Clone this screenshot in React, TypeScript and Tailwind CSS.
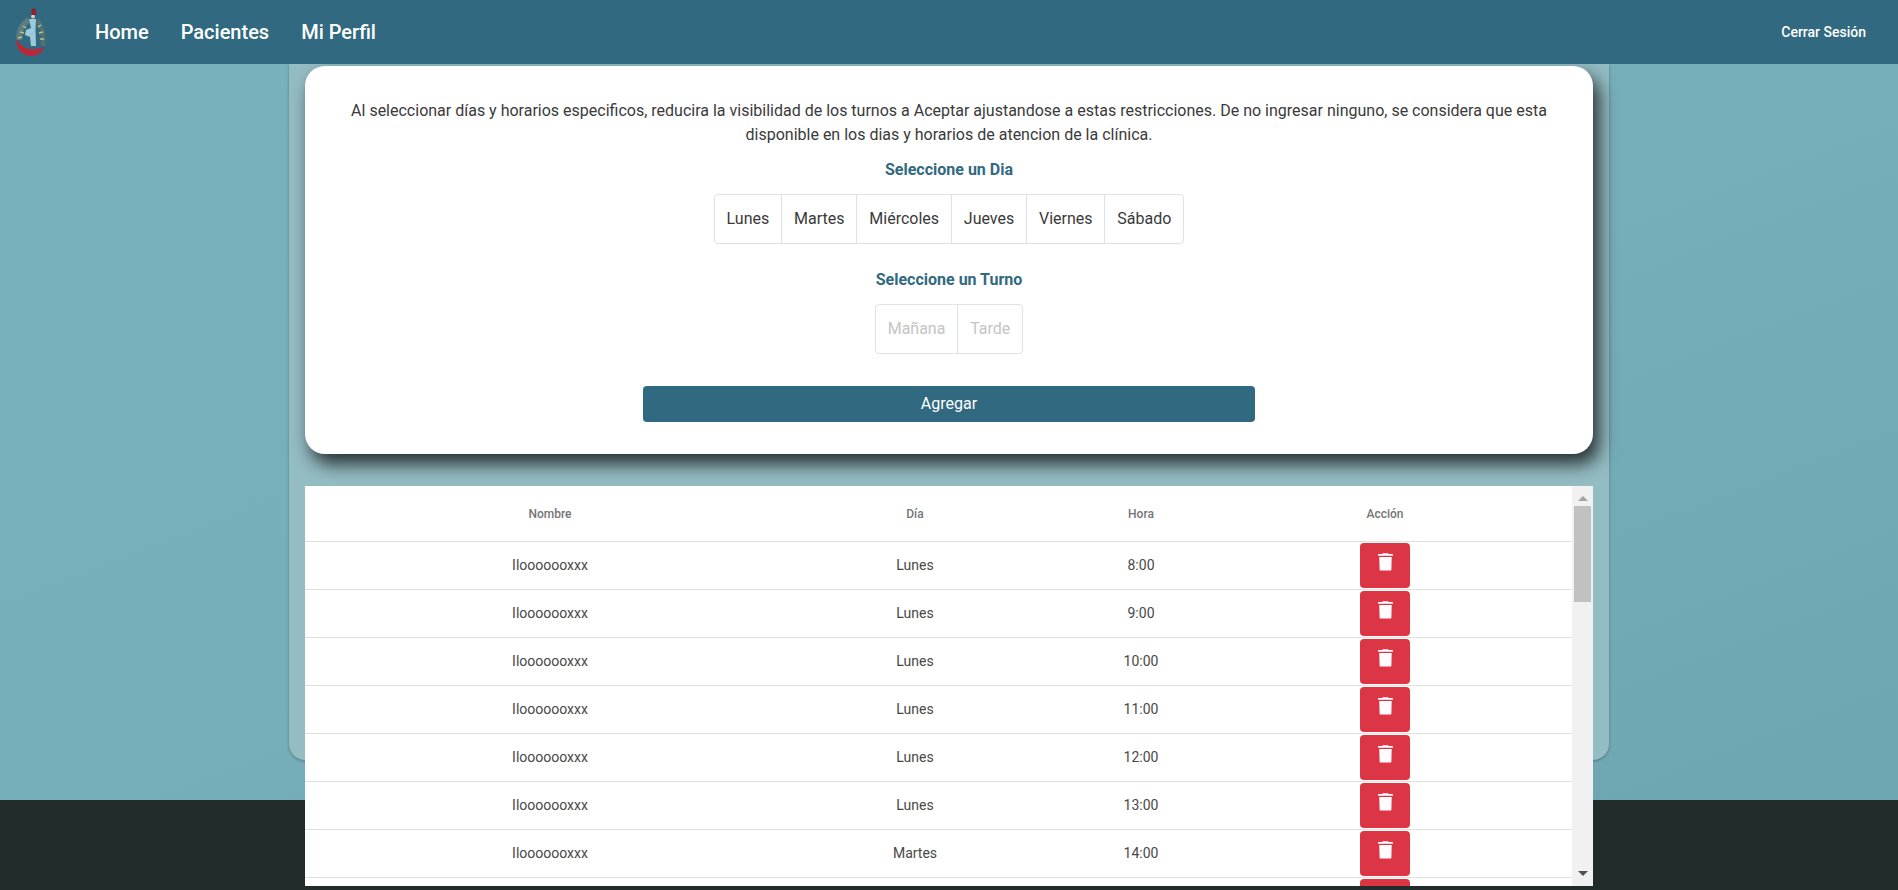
const days = ["Lunes", "Martes", "Miércoles", "Jueves", "Viernes", "Sábado"];
const shifts = ["Mañana", "Tarde"];

const rows = [
  { id: 1, name: "Ilooooooxxx", day: "Lunes", hour: "8:00" },
  { id: 2, name: "Ilooooooxxx", day: "Lunes", hour: "9:00" },
  { id: 3, name: "Ilooooooxxx", day: "Lunes", hour: "10:00" },
  { id: 4, name: "Ilooooooxxx", day: "Lunes", hour: "11:00" },
  { id: 5, name: "Ilooooooxxx", day: "Lunes", hour: "12:00" },
  { id: 6, name: "Ilooooooxxx", day: "Lunes", hour: "13:00" },
  { id: 7, name: "Ilooooooxxx", day: "Martes", hour: "14:00" },
  // only the top of this row's button shows above the fold
  { id: 8, name: "", day: "", hour: "" },
];

function Logo() {
  return (
    <svg width="30" height="48" viewBox="0 0 30 48" fill="none" aria-hidden="true">
      <path d="M3 32 C3 24 6 16 13 12" stroke="#5b7d80" strokeWidth="6" />
      <path d="M21 12 C26 18 28 28 27 38" stroke="#4f7174" strokeWidth="5" />
      <path d="M2 30l4-1M4 24l4 1M7 18l3 2M25 17l-3 2M27 24l-4 1M28 31l-4 0" stroke="#c2c184" strokeWidth="1.4" />
      <path d="M13 11 L20 11 L19.5 22 L20 38 L15 38 L14 29 L9 27 L10 22 L15 20 Z" fill="#9ccadb" />
      <circle cx="17" cy="8.5" r="2" fill="#d9c9b6" />
      <path d="M15.5 2 C15.5 0 19.5 0 20 2 L20.5 7 L15.5 7 Z" fill="#8a2433" />
      <path d="M0 30 C0 42 7 48 15 48 C22 48 27 44 28 39 C22 42 13 42 8 39 C4 37 1 33 0 30 Z" fill="#b8283a" />
    </svg>
  );
}

function TrashIcon() {
  return (
    <svg width="15" height="18" viewBox="0 0 15 18" fill="#ffffff" aria-hidden="true">
      <path d="M5 0.3 L10 0.3 L11 1 L14.5 1 Q15 1 15 1.6 L15 2.7 L0 2.7 L0 1.6 Q0 1 0.5 1 L4 1 Z" />
      <path d="M1.3 4 L13.7 4 L13.4 16.4 Q13.3 17.6 12 17.6 L3 17.6 Q1.7 17.6 1.6 16.4 Z" />
    </svg>
  );
}

function ButtonGroup({ items, muted }: { items: string[]; muted?: boolean }) {
  return (
    <div className="flex justify-center">
      {items.map((item, index) => (
        <button
          key={item}
          className={`h-[50px] border border-[#dee2e6] bg-white px-[11.9px] text-base ${index > 0 ? "-ml-px" : ""} ${index === 0 ? "rounded-l" : ""} ${index === items.length - 1 ? "rounded-r" : ""} ${muted ? "text-[#c4c4c4]" : "text-[#3a3a3a]"}`}
        >
          {item}
        </button>
      ))}
    </div>
  );
}

export default function App() {
  return (
    <div className="h-[890px] overflow-hidden bg-[#212b2a] font-['Roboto',sans-serif]">
      <header className="relative z-10 flex h-16 items-center bg-[#316980] pl-4 pr-8 text-white">
        <Logo />
        <nav className="ml-[49px] flex gap-8 text-xl font-medium">
          <a>Home</a>
          <a>Pacientes</a>
          <a>Mi Perfil</a>
        </nav>
        <a className="ml-auto text-sm font-medium">Cerrar Sesión</a>
      </header>

      <main className="h-[736px] bg-gradient-to-br from-[#78b1bb] via-[#76afb9] to-[#6da6b1]">
        <div className="mx-auto h-[696px] w-[1320px] rounded-b-2xl bg-[#94bcc3] px-4 pt-0.5 shadow-[0_1px_3px_rgba(0,0,0,0.3)]">
          <section className="rounded-[20px] bg-white px-8 pb-8 pt-[33px] text-center shadow-[6px_10px_18px_rgba(0,0,0,0.75)]">
            <p className="mx-auto max-w-[1224px] text-base leading-6 text-[#3a3a3a]">
              Al seleccionar días y horarios especificos, reducira la visibilidad de los turnos a Aceptar ajustandose a estas restricciones. De no ingresar ninguno, se considera que esta disponible en los dias y horarios de atencion de la clínica.
            </p>
            <h3 className="mb-3 mt-[11px] text-base font-bold leading-6 text-[#316980]">Seleccione un Dia</h3>
            <ButtonGroup items={days} />
            <h3 className="mb-3 mt-6 text-base font-bold leading-6 text-[#316980]">Seleccione un Turno</h3>
            <ButtonGroup items={shifts} muted />
            <button className="mt-8 h-9 w-[612px] rounded bg-[#316980] text-base text-white">Agregar</button>
          </section>

          <section className="relative z-10 mt-8 flex h-[400px] overflow-hidden bg-white">
            <div className="min-w-0 flex-1">
              <table className="w-full table-fixed border-separate border-spacing-0 text-center">
                <colgroup>
                  <col className="w-[490px]" />
                  <col className="w-[240px]" />
                  <col className="w-[212px]" />
                  <col className="w-[276px]" />
                  <col />
                </colgroup>
                <thead>
                  <tr className="h-14 text-xs text-[#757575]">
                    <th className="border-b border-[#e0e0e0] font-medium">Nombre</th>
                    <th className="border-b border-[#e0e0e0] font-medium">Día</th>
                    <th className="border-b border-[#e0e0e0] font-medium">Hora</th>
                    <th className="border-b border-[#e0e0e0] font-medium">Acción</th>
                    <th className="border-b border-[#e0e0e0]"></th>
                  </tr>
                </thead>
                <tbody className="text-sm text-[#484848]">
                  {rows.map((row) => (
                    <tr key={row.id} className="h-12">
                      <td className="border-b border-[#e0e0e0] p-0 pb-0.5">{row.name}</td>
                      <td className="border-b border-[#e0e0e0] p-0 pb-0.5">{row.day}</td>
                      <td className="border-b border-[#e0e0e0] p-0 pb-0.5">{row.hour}</td>
                      <td className="border-b border-[#e0e0e0] p-0">
                        <button className="mx-auto flex h-[45px] w-[50px] justify-center rounded bg-[#dc3545] pt-2.5">
                          <TrashIcon />
                        </button>
                      </td>
                      <td className="border-b border-[#e0e0e0] p-0"></td>
                    </tr>
                  ))}
                </tbody>
              </table>
            </div>

            <div className="flex w-[21px] flex-col items-center bg-[#f1f1f1] px-0.5">
              <div className="mb-[5px] mt-2.5 h-0 w-0 border-x-[5px] border-b-[5px] border-x-transparent border-b-[#a3a3a3]"></div>
              <div className="h-24 w-full bg-[#c1c1c1]"></div>
              <div className="mb-2.5 mt-auto h-0 w-0 border-x-[5px] border-t-[5px] border-x-transparent border-t-[#505050]"></div>
            </div>
          </section>
        </div>
      </main>
    </div>
  );
}
